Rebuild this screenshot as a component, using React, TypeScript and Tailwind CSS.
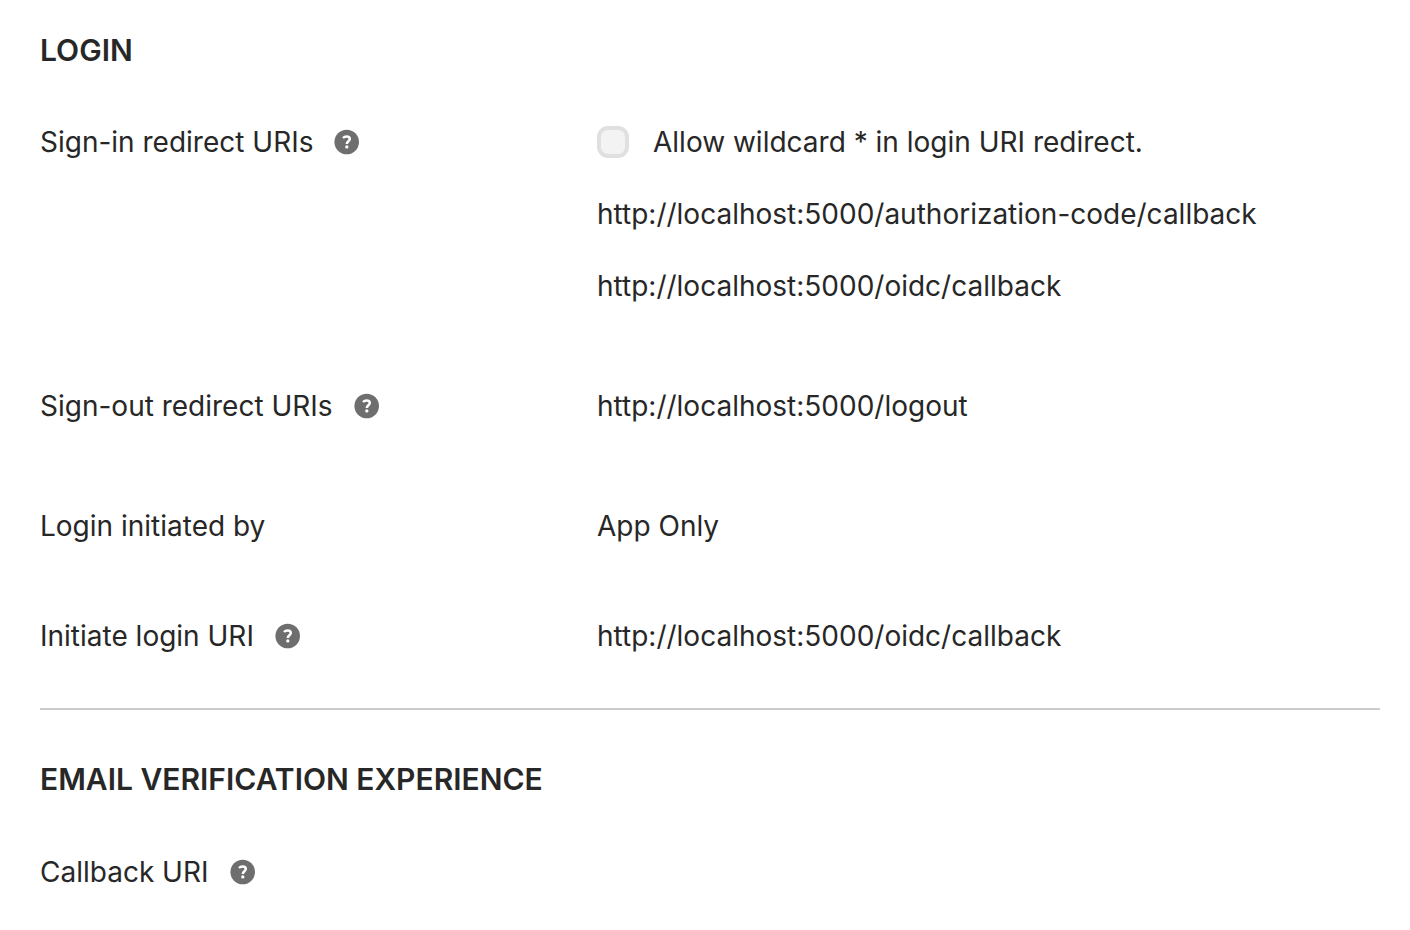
import { useId, type ReactNode } from "react";

function HelpButton({ label }: { label: string }) {
  return (
    <button type="button" aria-label={label} className="ml-[21px] block h-[26px] w-[26px]">
      <svg viewBox="0 0 26 26" className="h-full w-full">
        <circle cx="12.7" cy="13" r="12.3" fill="#6e6e6e" />
        <path
          d="M9 9C9.9 8 11.1 7.5 12.6 7.5c1.9 0 3.2 1 3.2 2.5 0 2.2-3 2.2-3 4.9"
          fill="none"
          stroke="#fff"
          strokeWidth="2.5"
        />
        <circle cx="12.8" cy="17.9" r="1.65" fill="#fff" />
      </svg>
    </button>
  );
}

function SectionTitle({ children }: { children: ReactNode }) {
  return <h2 className="text-[30px] leading-10 font-semibold">{children}</h2>;
}

function Row({ label, help, children }: { label: string; help?: boolean; children?: ReactNode }) {
  return (
    <div className="flex">
      <dt className="flex h-12 w-[557px] shrink-0 items-center">
        {label}
        {help && <HelpButton label={`About ${label}`} />}
      </dt>
      <dd className="flex min-w-0 flex-1 flex-col gap-6">{children}</dd>
    </div>
  );
}

function Value({ children }: { children: ReactNode }) {
  return <p className="flex h-12 items-center">{children}</p>;
}

export default function App() {
  const wildcardId = useId();
  return (
    <main className="bg-white pt-[30px] pr-[30px] pl-10 font-['Inter',sans-serif] text-[28px] leading-[48px] text-[#272727]">
      <section>
        <SectionTitle>LOGIN</SectionTitle>
        <dl className="flex flex-col pt-12 pb-12">
          <Row label="Sign-in redirect URIs" help>
            <div className="flex h-12 items-center gap-6">
              <input
                id={wildcardId}
                type="checkbox"
                className="h-8 w-8 shrink-0 appearance-none rounded-[11px] border-4 border-[#e0e0e0] bg-[#f3f3f3]"
              />
              <label htmlFor={wildcardId}>Allow wildcard * in login URI redirect.</label>
            </div>
            <Value>http://localhost:5000/authorization-code/callback</Value>
            <Value>http://localhost:5000/oidc/callback</Value>
          </Row>
          <div className="pt-[72px]">
            <Row label="Sign-out redirect URIs" help>
              <Value>http://localhost:5000/logout</Value>
            </Row>
          </div>
          <div className="pt-[72px]">
            <Row label="Login initiated by">
              <Value>App Only</Value>
            </Row>
          </div>
          <div className="pt-[62px]">
            <Row label="Initiate login URI" help>
              <Value>http://localhost:5000/oidc/callback</Value>
            </Row>
          </div>
        </dl>
      </section>
      <section className="border-t-2 border-[#cbcbcb] pt-[49px]">
        <SectionTitle>EMAIL VERIFICATION EXPERIENCE</SectionTitle>
        <dl className="pt-[49px]">
          <Row label="Callback URI" help />
        </dl>
      </section>
    </main>
  );
}
